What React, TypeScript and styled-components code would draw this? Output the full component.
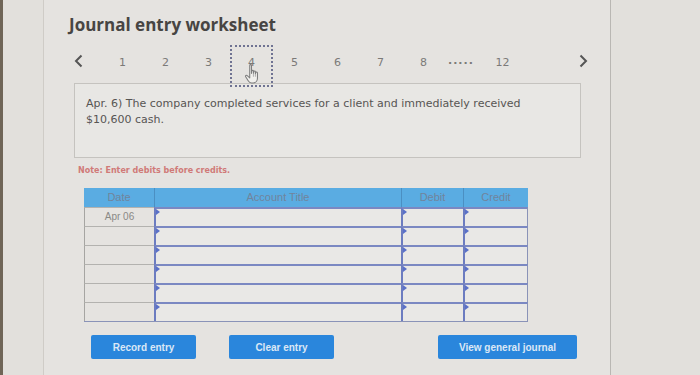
import styled, { createGlobalStyle } from "styled-components";

const GlobalStyle = createGlobalStyle`
  html, body {
    margin: 0;
    padding: 0;
    background: #e3e1dd;
  }
  * {
    box-sizing: border-box;
  }
`;

const pages = ["1", "2", "3", "4", "5", "6", "7", "8"];
const rows = ["Apr 06", "", "", "", "", ""];

function HandCursor() {
  return (
    <svg width="20" height="24" viewBox="0 0 18 22" aria-hidden="true">
      <path
        d="M6 2.2c0-1 1.6-1 1.6 0v7.3l.2-2c.1-1 1.6-1 1.6 0v2l.2-1.4c.1-1 1.6-1 1.6 0v1.8l.3-1c.2-.9 1.6-.7 1.6.2v4.6c0 2.6-1.6 4.6-3.8 4.6H7.6c-1.4 0-2.3-.8-3-2L2.3 12.6c-.5-.9.6-1.8 1.4-1.1L6 13.6V2.2z"
        fill="#f1f0ed"
        stroke="#7e7e7e"
        strokeWidth="1"
        strokeLinejoin="round"
      />
      <path d="M9.4 9.6v3M11.2 10v2.6" stroke="#9a9a9a" strokeWidth="0.7" />
    </svg>
  );
}

export default function App() {
  return (
    <>
      <GlobalStyle />
      <Frame>
        <Bezel />
        <Panel>
          <Title>Journal entry worksheet</Title>

          <Nav>
            <Chevron aria-label="previous">
              <svg width="9" height="14" viewBox="0 0 9 14">
                <path d="M7.5 1.5L2 7l5.5 5.5" fill="none" stroke="#555" strokeWidth="2" />
              </svg>
            </Chevron>
            <PageList>
              {pages.map((p) => (
                <PageItem key={p} $active={p === "4"}>
                  {p}
                  {p === "4" && (
                    <Cursor>
                      <HandCursor />
                    </Cursor>
                  )}
                </PageItem>
              ))}
              <Dots>.....</Dots>
              <PageItem $active={false}>12</PageItem>
            </PageList>
            <Chevron aria-label="next">
              <svg width="9" height="14" viewBox="0 0 9 14">
                <path d="M1.5 1.5L7 7l-5.5 5.5" fill="none" stroke="#555" strokeWidth="2" />
              </svg>
            </Chevron>
          </Nav>

          <Question>
            Apr. 6) The company completed services for a client and immediately received
            <br />
            $10,600 cash.
          </Question>

          <Note>Note: Enter debits before credits.</Note>

          <Table>
            <HeadCell>Date</HeadCell>
            <HeadCell>Account Title</HeadCell>
            <HeadCell>Debit</HeadCell>
            <HeadCell>Credit</HeadCell>
            {rows.map((date, i) => (
              <Row key={i}>
                <DateCell>{date}</DateCell>
                <InputCell />
                <InputCell />
                <InputCell $last />
              </Row>
            ))}
          </Table>

          <Actions>
            <ActionButton $width={105}>Record entry</ActionButton>
            <ActionButton $width={105}>Clear entry</ActionButton>
            <Spacer />
            <ActionButton $width={139}>View general journal</ActionButton>
          </Actions>
        </Panel>
      </Frame>
    </>
  );
}

const Frame = styled.div`
  display: flex;
  width: 700px;
  height: 375px;
  overflow: hidden;
  background: #e2e0dc;
`;

const Bezel = styled.div`
  width: 3px;
  flex: none;
  background: #6f6557;
  margin-right: 40px;
`;

const Panel = styled.div`
  width: 568px;
  flex: none;
  display: flex;
  flex-direction: column;
  padding: 14px 0 0 25px;
  border-left: 1px solid #cfccc7;
  border-right: 1px solid #b9b7b3;
  background: #e5e3e0;
`;

const Title = styled.h1`
  margin: 0;
  color: #474543;
  font-family: "Open Sans", "DejaVu Sans", sans-serif;
  font-size: 17px;
  font-weight: 700;
  line-height: 22px;
`;

const Nav = styled.div`
  display: flex;
  align-items: flex-start;
  height: 38px;
  margin: 9px 0 0 5px;
  position: relative;
  z-index: 1;
`;

const Chevron = styled.button`
  display: flex;
  align-items: center;
  height: 14px;
  margin-top: 9px;
  padding: 0;
  border: 0;
  background: transparent;
`;

const PageList = styled.div`
  display: flex;
  align-items: flex-start;
  margin-left: 18px;
  width: 478px;
`;

const PageItem = styled.div<{ $active: boolean }>`
  position: relative;
  width: 43px;
  height: ${({ $active }) => ($active ? "42px" : "30px")};
  padding-top: 9px;
  text-align: center;
  color: #7b7a78;
  font-family: "DejaVu Sans", sans-serif;
  font-size: 11px;
  line-height: 14px;
  border: ${({ $active }) => ($active ? "2px dotted #6f7392" : "2px solid transparent")};
`;

const Cursor = styled.span`
  position: absolute;
  left: 11px;
  top: 16px;
`;

const Dots = styled.div`
  width: 36px;
  padding: 9px 0 0 3px;
  color: #7b7a78;
  font-family: "DejaVu Sans", sans-serif;
  font-size: 11px;
  font-weight: 700;
  letter-spacing: 1px;
  line-height: 14px;
`;

const Question = styled.div`
  width: 507px;
  height: 75px;
  margin-left: 5px;
  padding: 12px 11px;
  border: 1px solid #c5c3bf;
  background: #e8e7e4;
  color: #575553;
  font-family: "DejaVu Sans", sans-serif;
  font-size: 11px;
  line-height: 16px;
`;

const Note = styled.div`
  margin: 7px 0 0 9px;
  color: #d07a78;
  font-family: "DejaVu Sans", sans-serif;
  font-size: 8px;
  font-weight: 700;
  line-height: 12px;
`;

const Table = styled.div`
  display: grid;
  grid-template-columns: 70px 247px 62px 65px;
  width: 444px;
  margin: 11px 0 0 15px;
  border-bottom: 1px solid #8a93b8;
`;

const HeadCell = styled.div`
  height: 19px;
  background: #5aace2;
  color: #71849c;
  font-family: "Liberation Sans", Arial, sans-serif;
  font-size: 11px;
  line-height: 19px;
  text-align: center;
  border-left: 1px solid #4b8fc2;
  &:first-child {
    border-left: 0;
  }
`;

const Row = styled.div`
  display: contents;
`;

const DateCell = styled.div`
  height: 19px;
  border-left: 1px solid #a6a5a2;
  border-top: 1px solid #b3b2af;
  color: #8a8986;
  font-family: "Liberation Sans", Arial, sans-serif;
  font-size: 10px;
  line-height: 17px;
  text-align: center;
`;

const InputCell = styled.div<{ $last?: boolean }>`
  position: relative;
  height: 19px;
  border-top: 2px solid #7b88c2;
  border-left: 2px solid #6c7cc0;
  border-right: ${({ $last }) => ($last ? "1px solid #8a93b8" : "0")};
  background: #e9e8e6;

  &::before {
    content: "";
    position: absolute;
    left: 0;
    top: 0;
    border-top: 3px solid transparent;
    border-bottom: 3px solid transparent;
    border-left: 4px solid #5a70c8;
  }
`;

const Actions = styled.div`
  display: flex;
  align-items: center;
  width: 486px;
  margin: 13px 0 0 22px;
  gap: 33px;
`;

const Spacer = styled.div`
  flex: 1;
`;

const ActionButton = styled.button<{ $width: number }>`
  width: ${({ $width }) => $width}px;
  height: 24px;
  padding: 0;
  border: 0;
  border-radius: 2px;
  background: #2a86dc;
  color: #dbe8f6;
  font-family: "Liberation Sans", Arial, sans-serif;
  font-size: 10px;
  font-weight: 700;
`;
